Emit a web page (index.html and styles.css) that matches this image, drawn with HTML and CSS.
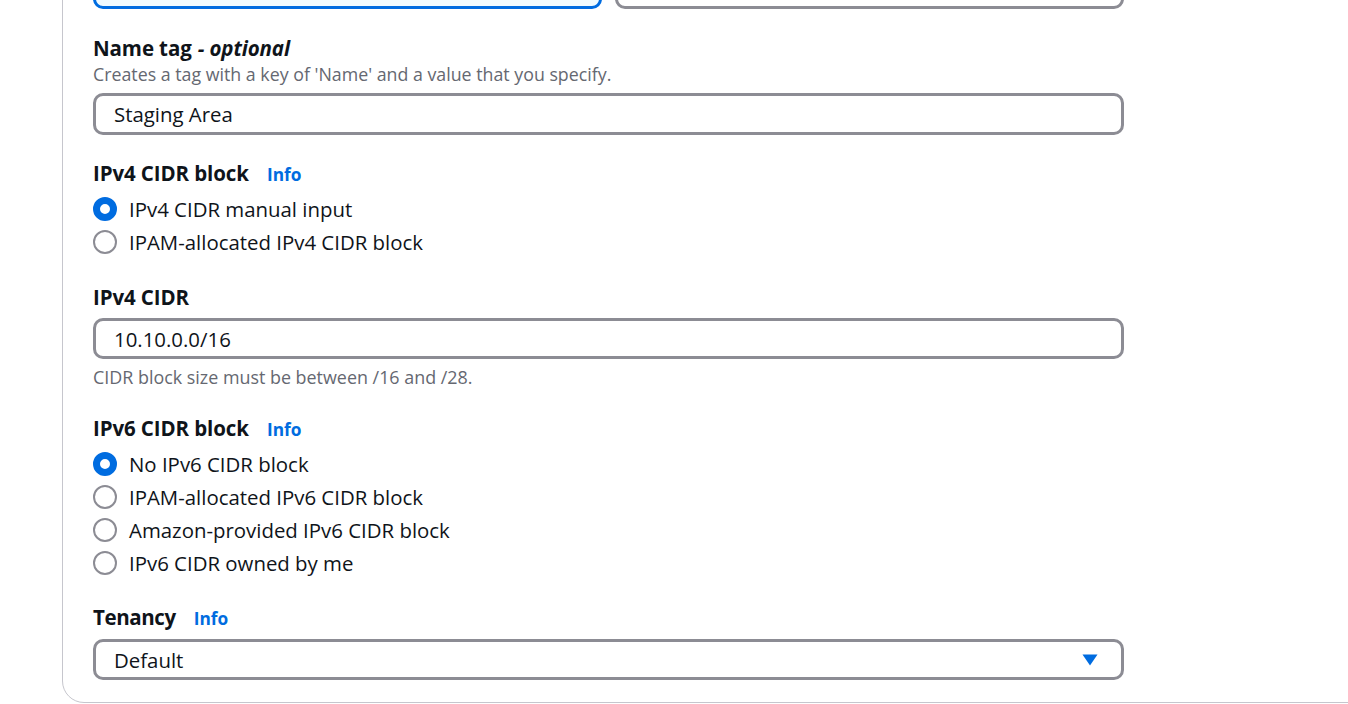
FILE: index.html
```html
<!DOCTYPE html>
<html lang="en">
<head>
<meta charset="utf-8">
<title>Create VPC</title>
<link rel="stylesheet" href="styles.css">
</head>
<body>
<div class="card">
  <div class="form">
    <div class="tiles">
      <div class="tile tile-selected"></div>
      <div class="tile"></div>
    </div>

    <div class="field">
      <div class="label">Name tag <span class="opt">- optional</span></div>
      <div class="desc">Creates a tag with a key of 'Name' and a value that you specify.</div>
      <div class="input input-desc">Staging Area</div>
    </div>

    <div class="field">
      <div class="label">IPv4 CIDR block <span class="info">Info</span></div>
      <div class="radios">
        <div class="radio"><span class="dot dot-on"></span>IPv4 CIDR manual input</div>
        <div class="radio"><span class="dot"></span>IPAM-allocated IPv4 CIDR block</div>
      </div>
    </div>

    <div class="field">
      <div class="label">IPv4 CIDR</div>
      <div class="input">10.10.0.0/16</div>
      <div class="hint">CIDR block size must be between /16 and /28.</div>
    </div>

    <div class="field">
      <div class="label">IPv6 CIDR block <span class="info">Info</span></div>
      <div class="radios radios-last">
        <div class="radio"><span class="dot dot-on"></span>No IPv6 CIDR block</div>
        <div class="radio"><span class="dot"></span>IPAM-allocated IPv6 CIDR block</div>
        <div class="radio"><span class="dot"></span>Amazon-provided IPv6 CIDR block</div>
        <div class="radio"><span class="dot"></span>IPv6 CIDR owned by me</div>
      </div>
    </div>

    <div class="field">
      <div class="label label-tenancy">Tenancy <span class="info">Info</span></div>
      <div class="input select">
        <span>Default</span>
        <svg class="caret" width="16" height="12" viewBox="0 0 16 12"><path d="M0.5 0.5 H15.5 L8 11.5 Z" fill="#006ce0"/></svg>
      </div>
    </div>
  </div>
</div>
</body>
</html>
```

FILE: styles.css
```css
html, body {
  margin: 0;
  padding: 0;
  background: #ffffff;
  overflow: hidden;
}
body {
  font-family: "Open Sans", "Noto Sans", Arial, sans-serif;
  color: #0f141a;
  height: 704px;
}
.card {
  margin-top: -100px;
  margin-left: 62px;
  width: 1400px;
  border: 1px solid #c6c6cd;
  border-radius: 22px;
  padding: 0 0 22px 30px;
  box-sizing: border-box;
}
.form {
  width: 1031px;
  display: flex;
  flex-direction: column;
  gap: 26px;
}
.tiles {
  display: flex;
  gap: 13px;
  margin-bottom: 1px;
}
.tile {
  flex: 1;
  height: 108px;
  border: 3px solid #8c8c94;
  border-radius: 10px;
  box-sizing: border-box;
}
.tile-selected {
  border: 3px solid #006ce0;
  background: #f0fbff;
}
.field {
  display: flex;
  flex-direction: column;
}
.label {
  font-size: 20.5px;
  line-height: 25px;
  font-weight: 700;
  letter-spacing: -0.1px;
  display: flex;
  align-items: baseline;
}
.label-tenancy {
  letter-spacing: -0.4px;
}
.opt {
  font-style: italic;
  margin-left: 6px;
}
.info {
  color: #006ce0;
  font-size: 17.3px;
  font-weight: 700;
  margin-left: 18px;
  letter-spacing: 0;
}
.desc {
  font-size: 17.8px;
  line-height: 20px;
  color: #656871;
  margin-top: 3px;
}
.input {
  margin-top: 8px;
  height: 41px;
  border: 3px solid #8c8c94;
  border-radius: 10px;
  box-sizing: border-box;
  padding: 0 18px;
  display: flex;
  align-items: center;
  font-size: 20.4px;
}
.input-desc {
  margin-top: 9px;
  height: 42px;
}
.select {
  justify-content: space-between;
  padding-right: 23px;
}
.caret {
  display: block;
}
.hint {
  font-size: 17.9px;
  line-height: 20px;
  color: #656871;
  margin-top: 8px;
  margin-bottom: 3px;
}
.radios {
  margin-top: 7px;
  margin-bottom: 3px;
  display: flex;
  flex-direction: column;
  gap: 4px;
}
.radios-last {
  margin-bottom: 2px;
}
.radio {
  height: 29px;
  display: flex;
  align-items: center;
  font-size: 20.4px;
}
.dot {
  width: 24px;
  height: 24px;
  box-sizing: border-box;
  border: 2.5px solid #8c8c94;
  border-radius: 50%;
  margin-right: 12px;
  flex: none;
}
.dot-on {
  border: 7.5px solid #006ce0;
}
```
